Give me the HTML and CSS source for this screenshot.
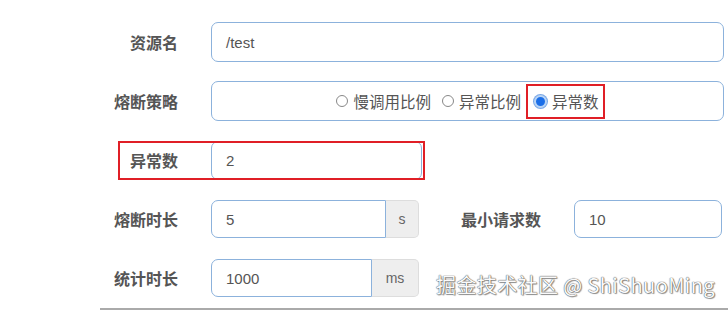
FILE: index.html
```html
<!DOCTYPE html>
<html lang="zh">
<head>
<meta charset="utf-8">
<link rel="stylesheet" href="styles.css">
</head>
<body>
<div class="page">
  <form class="form">
    <div class="row">
      <label class="label">资源名</label>
      <div class="input wide">/test</div>
    </div>
    <div class="row">
      <label class="label">熔断策略</label>
      <div class="input wide radios">
        <span class="opt"><span class="radio"></span>慢调用比例</span>
        <span class="opt"><span class="radio"></span>异常比例</span>
        <span class="opt picked"><span class="radio on"></span>异常数</span>
      </div>
    </div>
    <div class="row">
      <div class="mark">
        <label class="label short">异常数</label>
        <div class="input mid">2</div>
      </div>
    </div>
    <div class="row">
      <label class="label">熔断时长</label>
      <div class="group">
        <div class="input gi g1">5</div>
        <div class="addon">s</div>
      </div>
      <label class="label2">最小请求数</label>
      <div class="input small">10</div>
    </div>
    <div class="row">
      <label class="label">统计时长</label>
      <div class="group">
        <div class="input gi g2">1000</div>
        <div class="addon a2">ms</div>
      </div>
    </div>
  </form>
  <div class="rule"></div>
  <div class="watermark">掘金技术社区 @ ShiShuoMing</div>
</div>
</body>
</html>
```
FILE: styles.css
```css
* { box-sizing: border-box; }
html, body { margin: 0; padding: 0; background: #fff; }
body { width: 728px; height: 310px; overflow: hidden; font-family: "Liberation Sans", "Noto Sans CJK SC", sans-serif; }
.page { position: relative; width: 728px; height: 310px; padding-top: 22px; }
.form { display: flex; flex-direction: column; gap: 19px; }
.row { display: flex; align-items: center; height: 40px; }
.label {
  width: 178px; text-align: right; padding-right: 0;
  font-family: "Noto Sans CJK SC", sans-serif; font-weight: 700; font-size: 16px; color: #555;
  margin-right: 33px; flex: none;
}
.label.short { width: 60px; }
.input {
  height: 40px; border: 1.5px solid #8cb2dc; border-radius: 7px; background: #fff;
  display: flex; align-items: center; padding-left: 14px;
  font-size: 15px; color: #555; font-family: "Liberation Sans", sans-serif; flex: none;
}
.wide { width: 513px; }
.mid { width: 211px; height: 39px; }
.radios { justify-content: center; padding-left: 0; padding-right: 0; gap: 3px; font-family: "Noto Sans CJK SC", sans-serif; font-size: 15.5px; color: #555; }
.opt { display: inline-flex; align-items: center; height: 31px; padding: 0 4px; }
.opt.picked { outline: 2px solid #e01f26; outline-offset: 0; padding: 0 4px 0 6px; }
.radio { width: 12px; height: 12px; border: 1px solid #888; border-radius: 50%; margin-right: 5px; background: #fff; }
.radio.on { width: 13px; height: 13px; border: 2px solid #b8d4f5; background: #1a6ee8; box-shadow: 0 0 0 1px #7aa8e6; }
.mark {
  display: flex; align-items: center; height: 39px; margin-left: 118px;
  outline: 2px solid #e01f26; outline-offset: -2px; width: 307px;
}
.group { display: flex; height: 38px; flex: none; }
.gi { height: 38px; border-radius: 7px 0 0 7px; }
.g1 { width: 175px; }
.g2 { width: 161px; }
.addon {
  width: 33px; border: 1px solid #ddd; border-left: none; border-radius: 0 5px 5px 0;
  background: #eee; color: #666; font-size: 14px; display: flex; align-items: center; justify-content: center;
}
.addon.a2 { width: 47px; }
.label2 {
  margin-left: 42px; width: 80px; font-family: "Noto Sans CJK SC", sans-serif; font-weight: 700; font-size: 16px; color: #555; flex: none;
}
.small { margin-left: 33px; width: 148px; height: 38px; }
.rule { margin: 10px 0 0 100px; height: 2px; background: #aaa; }
.watermark {
  position: absolute; left: 436px; top: 270px;
  font-family: "Noto Sans CJK SC", sans-serif; font-size: 20px; color: #fafafa;
  text-shadow: 0 0 1px #555, 0 0 1px #555, 1px 1px 1px #999;
  letter-spacing: 0.4px; white-space: nowrap;
}
```
